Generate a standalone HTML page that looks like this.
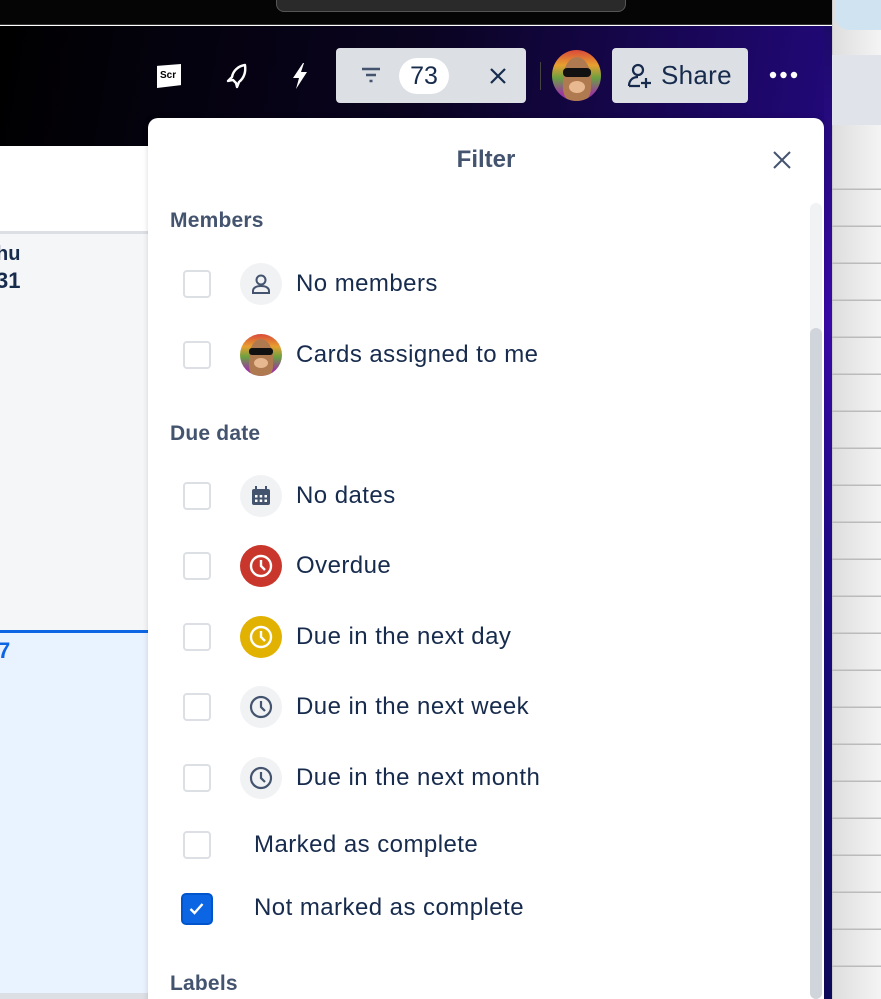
<!DOCTYPE html><html><head><style>
*{margin:0;padding:0;box-sizing:border-box}
html,body{width:881px;height:999px;overflow:hidden}
body{position:relative;font-family:"Liberation Sans",sans-serif;background:#fff}
.abs{position:absolute}
.cb{position:absolute;left:183px;width:28px;height:28px;border:2.5px solid #dcdfe4;border-radius:4px;background:#fff}
.ic{position:absolute;left:240px;width:42px;height:42px;border-radius:50%;background:#f1f2f4;display:flex;align-items:center;justify-content:center}
.t{position:absolute;font-size:24px;letter-spacing:0.45px;color:#172b4d;line-height:30px}
.h{position:absolute;left:170px;font-size:21px;letter-spacing:0.2px;font-weight:bold;color:#44546f;line-height:24px}
</style></head><body>
<div class="abs" style="left:0;top:0;width:832px;height:25px;background:#050505;border-bottom:1px solid #333"></div>
<div class="abs" style="left:276px;top:-10px;width:350px;height:22px;background:#2a2a2a;border:1px solid #555;border-radius:8px"></div>
<div class="abs" style="left:0;top:26px;width:832px;height:120px;background:linear-gradient(100deg,#000 0%,#0a0420 50%,#22087a 100%)"></div>
<div class="abs" style="left:832px;top:0;width:49px;height:999px;background:linear-gradient(90deg,#dedede,#f4f4f4);border-left:1px solid #ccc"></div>
<div class="abs" style="left:835px;top:-20px;width:60px;height:50px;background:#cfe3f0;border-radius:14px"></div>
<div class="abs" style="left:832px;top:55px;width:49px;height:70px;background:#e0e4ea"></div>
<div class="abs" style="left:824px;top:26px;width:8px;height:973px;background:linear-gradient(180deg,#1c0a6a,#3a0aa8 30%,#1a0a80 60%,#0e0a5a)"></div>
<div class="abs" style="left:832px;top:153px;width:49px;height:846px;background:repeating-linear-gradient(180deg,transparent 0,transparent 35.5px,#bbb 35.5px,#bbb 37px)"></div>
<div class="abs" style="left:157px;top:64px;width:24px;height:24px;background:#fff;clip-path:polygon(0 8%,100% 0,100% 88%,0 100%);font-size:10px;font-weight:bold;color:#000;line-height:24px;padding-left:3px">Scr</div>
<svg class="abs" style="left:224px;top:62px" width="26" height="28" viewBox="0 0 26 28" fill="none" stroke="#fff" stroke-width="2.4" stroke-linejoin="round"><path d="M21 3 C14 4 9 9 8 15 L4 19 L9 18 L12 21 L13 25 L15 20 C20 16 22 10 21 3Z"/></svg>
<svg class="abs" style="left:290px;top:62px" width="20" height="28" viewBox="0 0 20 28"><path d="M13 1 L3 16 H9 L6 27 L17 10 H11 L14 1Z" fill="#fff"/></svg>
<div class="abs" style="left:336px;top:48px;width:190px;height:55px;background:#dcdfe4;border-radius:4px"></div>
<svg class="abs" style="left:360px;top:66px" width="22" height="18" viewBox="0 0 22 18" stroke="#44546f" stroke-width="2.4"><path d="M2 3H20M6 9H16M9.5 15H12.5"/></svg>
<div class="abs" style="left:399px;top:58px;width:50px;height:36px;background:#fff;border-radius:18px;font-size:25px;color:#172b4d;text-align:center;line-height:36px">73</div>
<svg class="abs" style="left:487px;top:65px" width="22" height="22" viewBox="0 0 22 22" stroke="#172b4d" stroke-width="2.2"><path d="M4 4L18 18M18 4L4 18"/></svg>
<div class="abs" style="left:540px;top:62px;width:1px;height:28px;background:#444"></div>
<div class="abs" style="left:552px;top:50px;width:49px;height:51px;border-radius:50%;overflow:hidden;background:linear-gradient(180deg,#d94a3a,#e8a030 30%,#6aa040 55%,#9a3aa0 85%)"><div style="margin:7px auto 0;width:28px;height:44px;border-radius:50% 50% 30% 30%;background:#b07a50;position:relative"><div style="position:absolute;top:11px;left:0;width:28px;height:9px;background:#111;border-radius:4px"></div><div style="position:absolute;top:24px;left:6px;width:16px;height:12px;background:#e8b890;border-radius:50%"></div></div></div>
<div class="abs" style="left:612px;top:48px;width:136px;height:55px;background:#dcdfe4;border-radius:4px"></div>
<svg class="abs" style="left:626px;top:62px" width="28" height="28" viewBox="0 0 28 28" fill="none" stroke="#172b4d" stroke-width="2.2"><circle cx="12" cy="8" r="5"/><path d="M3 24c0-6 4-9 9-9"/><path d="M3 24H14M20 16V26M15 21H25"/></svg>
<div class="abs" style="left:661px;top:59px;font-size:26px;letter-spacing:0.3px;color:#172b4d;line-height:32px">Share</div>
<svg class="abs" style="left:768px;top:70px" width="32" height="10"><circle cx="5" cy="5" r="3.2" fill="#fff"/><circle cx="15.5" cy="5" r="3.2" fill="#fff"/><circle cx="26" cy="5" r="3.2" fill="#fff"/></svg>
<div class="abs" style="left:0;top:146px;width:148px;height:86px;background:#fff"></div>
<div class="abs" style="left:0;top:231px;width:148px;height:3px;background:#dcdfe4"></div>
<div class="abs" style="left:0;top:234px;width:148px;height:396px;background:#f5f6f8"></div>
<div class="abs" style="left:-4px;top:243px;font-size:20px;font-weight:bold;color:#172b4d">hu</div>
<div class="abs" style="left:-4px;top:268px;font-size:22px;font-weight:bold;color:#172b4d">31</div>
<div class="abs" style="left:0;top:630px;width:148px;height:3px;background:#0c66e4"></div>
<div class="abs" style="left:0;top:633px;width:148px;height:360px;background:#e9f2ff"></div>
<div class="abs" style="left:0;top:993px;width:148px;height:6px;background:#dcdfe4"></div>
<div class="abs" style="left:-2px;top:638px;font-size:22px;font-weight:bold;color:#0c66e4">7</div>
<div class="abs" style="left:148px;top:118px;width:676px;height:900px;background:#fff;border-radius:10px;box-shadow:0 0 6px rgba(0,0,0,.15)"></div>
<div class="abs" style="left:148px;top:146px;width:676px;text-align:center;font-size:24px;font-weight:bold;color:#44546f">Filter</div>
<svg class="abs" style="left:772px;top:150px" width="20" height="20" viewBox="0 0 20 20" stroke="#44546f" stroke-width="2"><path d="M2 2L18 18M18 2L2 18"/></svg>
<div class="abs" style="left:810px;top:203px;width:12px;height:796px;background:#f1f2f4;border-radius:6px"></div>
<div class="abs" style="left:810px;top:328px;width:12px;height:671px;background:#d0d5dc;border-radius:6px"></div>

<div class="h" style="top:209px">Members</div>
<div class="cb" style="top:270px"></div><div class="ic" style="top:263px"><svg width="24" height="24" viewBox="0 0 24 24" fill="none" stroke="#44546f" stroke-width="2"><circle cx="12" cy="8" r="4.5"/><path d="M4 21v-2c0-3 3-5 8-5s8 2 8 5v2z"/></svg></div>
<div class="t" style="left:296px;top:269px">No members</div>
<div class="cb" style="top:341px"></div>
<div class="ic" style="top:334px;background:linear-gradient(180deg,#d94a3a,#e8a030 30%,#6aa040 55%,#9a3aa0 85%);overflow:hidden;align-items:flex-start"><div style="width:24px;height:38px;margin-top:5px;border-radius:50% 50% 30% 30%;background:#b07a50;position:relative"><div style="position:absolute;top:9px;left:0;width:24px;height:7px;background:#111;border-radius:3px"></div><div style="position:absolute;top:19px;left:5px;width:14px;height:10px;background:#e8b890;border-radius:50%"></div></div></div>
<div class="t" style="left:296px;top:340px">Cards assigned to me</div>

<div class="h" style="top:422px">Due date</div>
<div class="cb" style="top:482px"></div><div class="ic" style="top:475px"><svg width="22" height="22" viewBox="0 0 22 22"><rect x="2" y="4" width="18" height="16" rx="2" fill="#44546f"/><rect x="5" y="1" width="2" height="5" fill="#44546f"/><rect x="15" y="1" width="2" height="5" fill="#44546f"/><g fill="#fff"><rect x="5" y="10" width="2.5" height="2.5"/><rect x="9.7" y="10" width="2.5" height="2.5"/><rect x="14.5" y="10" width="2.5" height="2.5"/><rect x="5" y="14.5" width="2.5" height="2.5"/><rect x="9.7" y="14.5" width="2.5" height="2.5"/><rect x="14.5" y="14.5" width="2.5" height="2.5"/></g></svg></div>
<div class="t" style="left:296px;top:481px">No dates</div>
<div class="cb" style="top:552px"></div><div class="ic" style="top:545px;background:#c9372c"><svg width="26" height="26" viewBox="0 0 26 26" fill="none" stroke="#fff" stroke-width="2.4"><circle cx="13" cy="13" r="10"/><path d="M13 7v6l4 4"/></svg></div>
<div class="t" style="left:296px;top:551px">Overdue</div>
<div class="cb" style="top:623px"></div><div class="ic" style="top:616px;background:#e2b203"><svg width="26" height="26" viewBox="0 0 26 26" fill="none" stroke="#fff" stroke-width="2.4"><circle cx="13" cy="13" r="10"/><path d="M13 7v6l4 4"/></svg></div>
<div class="t" style="left:296px;top:622px">Due in the next day</div>
<div class="cb" style="top:693px"></div><div class="ic" style="top:686px"><svg width="26" height="26" viewBox="0 0 26 26" fill="none" stroke="#44546f" stroke-width="2.2"><circle cx="13" cy="13" r="10"/><path d="M13 7v6l4 4"/></svg></div>
<div class="t" style="left:296px;top:692px">Due in the next week</div>
<div class="cb" style="top:764px"></div><div class="ic" style="top:757px"><svg width="26" height="26" viewBox="0 0 26 26" fill="none" stroke="#44546f" stroke-width="2.2"><circle cx="13" cy="13" r="10"/><path d="M13 7v6l4 4"/></svg></div>
<div class="t" style="left:296px;top:763px">Due in the next month</div>
<div class="cb" style="top:831px"></div>
<div class="t" style="left:254px;top:830px">Marked as complete</div>
<div class="cb" style="top:893px;left:181px;width:32px;height:32px;background:#0c66e4;border-color:#0055cc;border-radius:5px"><svg width="27" height="27" viewBox="0 0 27 27" fill="none" stroke="#fff" stroke-width="2.4"><path d="M7.5 14l4 4 8-9"/></svg></div>
<div class="t" style="left:254px;top:893px">Not marked as complete</div>
<div class="h" style="top:972px">Labels</div>
</body></html>
